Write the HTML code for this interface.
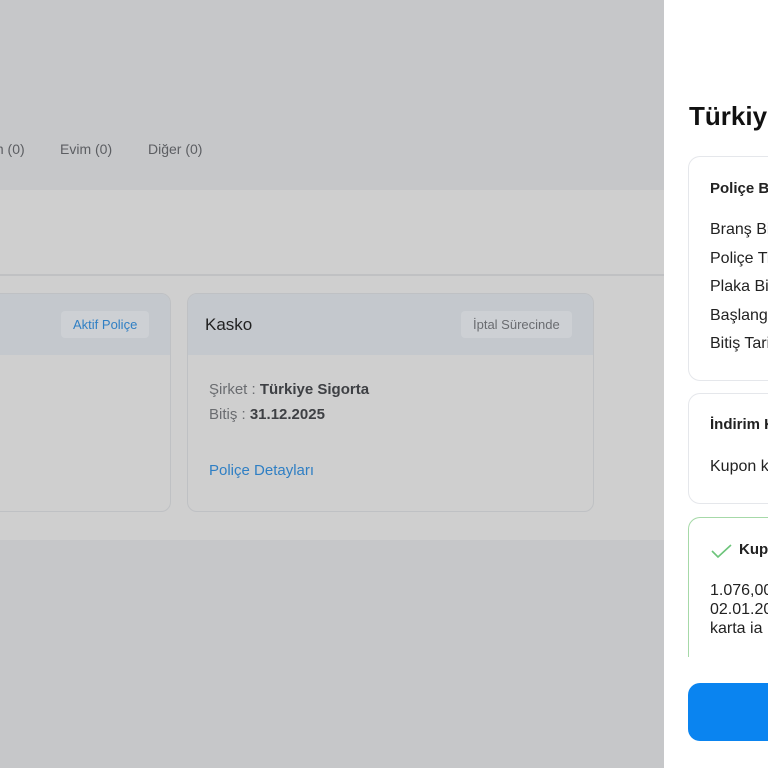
<!DOCTYPE html>
<html><head><meta charset="utf-8"><style>
*{box-sizing:border-box;margin:0;padding:0}
html,body{width:768px;height:768px;overflow:hidden}
body{font-family:"Liberation Sans",sans-serif}
#w{position:relative;width:768px;height:768px;overflow:hidden;background:#c6c7c9}
.abs{position:absolute}
.tab{top:141px;font-size:14px;color:#5c5e62}
.band{left:0;top:190px;width:664px;height:350px;background:#cfcfcf}
.line{left:0;top:274px;width:664px;height:2px;background:#c0c1c3}
.card{top:293px;height:219px;border:1px solid #bfc1c4;border-radius:10px;background:#cfcfcf;overflow:hidden}
.card .hd{height:61px;background:#c4c8cd;position:relative}
.badge{position:absolute;top:17px;height:27px;border-radius:4px;background:#cdd0d4;font-size:13px;line-height:27px;padding:0 12px}
.panel{left:664px;top:0;width:104px;height:768px;background:#fff;overflow:hidden}
.box{left:24px;width:100px;border:1px solid #e5e7eb;border-right:none;border-radius:12px 0 0 12px;background:#fff}
.t{position:absolute;left:21px;font-size:16px;color:#222;white-space:nowrap}
</style></head><body><div id="w">
<div class="abs tab" style="left:-8px">m (0)</div>
<div class="abs tab" style="left:60px">Evim (0)</div>
<div class="abs tab" style="left:148px">Diğer (0)</div>
<div class="abs band"></div>
<div class="abs line"></div>
<div class="abs card" style="left:-20px;width:191px"><div class="hd"><div class="badge" style="left:80px;color:#2f7fc4">Aktif Poliçe</div></div></div>
<div class="abs card" style="left:187px;width:407px">
 <div class="hd"><div style="position:absolute;left:17px;top:21px;font-size:17px;color:#222">Kasko</div>
 <div class="badge" style="left:273px;color:#6a6c70">İptal Sürecinde</div></div>
 <div style="position:absolute;left:21px;top:87px;font-size:15px;color:#6a6c70">Şirket : <b style="color:#3e4044;font-weight:600">Türkiye Sigorta</b></div>
 <div style="position:absolute;left:21px;top:112px;font-size:15px;color:#6a6c70">Bitiş : <b style="color:#3e4044;font-weight:600">31.12.2025</b></div>
 <div style="position:absolute;left:21px;top:168px;font-size:15px;color:#2f7fc4">Poliçe Detayları</div>
</div>
<div class="abs panel">
<div class="abs" style="left:25px;top:101px;font-size:26px;font-weight:bold;color:#111;white-space:nowrap">Türkiye Sigorta</div>
<div class="abs box" style="top:156px;height:225px">
 <div class="t" style="top:23px;font-weight:600;font-size:15px">Poliçe Bilgileri</div>
 <div class="t" style="top:64px">Branş Bilgisi</div>
 <div class="t" style="top:93px">Poliçe Tipi</div>
 <div class="t" style="top:121px">Plaka Bilgisi</div>
 <div class="t" style="top:150px">Başlangıç Tarihi</div>
 <div class="t" style="top:178px">Bitiş Tarihi</div>
</div>
<div class="abs box" style="top:393px;height:111px">
 <div class="t" style="top:22px;font-weight:600;font-size:15px">İndirim Kuponu</div>
 <div class="t" style="top:64px">Kupon kodu</div>
</div>
<div class="abs box" style="top:517px;height:140px;border-color:#a6d9a8;border-bottom:none;border-radius:12px 0 0 0">
 <svg style="position:absolute;left:22px;top:25px" width="22" height="16" viewBox="0 0 22 16"><path d="M1 8l6 6L20 2" fill="none" stroke="#6cc47a" stroke-width="1.6"/></svg>
 <div class="t" style="left:50px;top:23px;font-weight:600;font-size:15px">Kupon</div>
 <div class="t" style="top:63px;line-height:19px">1.076,00<br>02.01.20<br>karta ia</div>
</div>
<div class="abs" style="left:24px;top:683px;width:100px;height:58px;border-radius:12px 0 0 12px;background:#0a84f0"></div>
</div>
</div></body></html>
